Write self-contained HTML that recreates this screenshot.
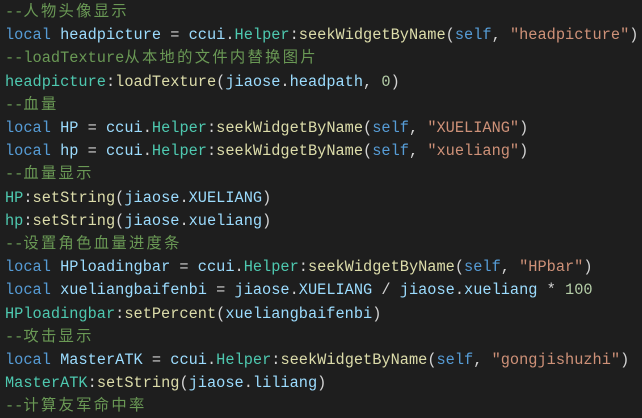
<!DOCTYPE html>
<html><head><style>
html,body{margin:0;padding:0;background:#1e1e1e;width:642px;height:418px;overflow:hidden}
pre{margin:0;padding:1px 0 0 5px;font-family:"Liberation Mono","Noto Sans CJK SC",monospace;font-size:15.3px;line-height:23.2px;color:#d4d4d4;white-space:pre}
.c{color:#6a9955}.k{color:#569cd6}.v{color:#9cdcfe}.t{color:#4ec9b0}.f{color:#dcdcaa}.s{color:#ce9178}.n{color:#b5cea8}
.z{letter-spacing:2.3px}
</style></head><body><pre>
<span class="c">--<span class="z">人物头像显示</span></span>
<span class="k">local</span> <span class="v">headpicture</span> = <span class="v">ccui</span>.<span class="t">Helper</span>:<span class="f">seekWidgetByName</span>(<span class="k">self</span>, <span class="s">"headpicture"</span>)
<span class="c">--loadTexture<span class="z">从本地的文件内替换图片</span></span>
<span class="t">headpicture</span>:<span class="f">loadTexture</span>(<span class="v">jiaose</span>.<span class="v">headpath</span>, <span class="n">0</span>)
<span class="c">--<span class="z">血量</span></span>
<span class="k">local</span> <span class="v">HP</span> = <span class="v">ccui</span>.<span class="t">Helper</span>:<span class="f">seekWidgetByName</span>(<span class="k">self</span>, <span class="s">"XUELIANG"</span>)
<span class="k">local</span> <span class="v">hp</span> = <span class="v">ccui</span>.<span class="t">Helper</span>:<span class="f">seekWidgetByName</span>(<span class="k">self</span>, <span class="s">"xueliang"</span>)
<span class="c">--<span class="z">血量显示</span></span>
<span class="t">HP</span>:<span class="f">setString</span>(<span class="v">jiaose</span>.<span class="v">XUELIANG</span>)
<span class="t">hp</span>:<span class="f">setString</span>(<span class="v">jiaose</span>.<span class="v">xueliang</span>)
<span class="c">--<span class="z">设置角色血量进度条</span></span>
<span class="k">local</span> <span class="v">HPloadingbar</span> = <span class="v">ccui</span>.<span class="t">Helper</span>:<span class="f">seekWidgetByName</span>(<span class="k">self</span>, <span class="s">"HPbar"</span>)
<span class="k">local</span> <span class="v">xueliangbaifenbi</span> = <span class="v">jiaose</span>.<span class="v">XUELIANG</span> / <span class="v">jiaose</span>.<span class="v">xueliang</span> * <span class="n">100</span>
<span class="t">HPloadingbar</span>:<span class="f">setPercent</span>(<span class="v">xueliangbaifenbi</span>)
<span class="c">--<span class="z">攻击显示</span></span>
<span class="k">local</span> <span class="v">MasterATK</span> = <span class="v">ccui</span>.<span class="t">Helper</span>:<span class="f">seekWidgetByName</span>(<span class="k">self</span>, <span class="s">"gongjishuzhi"</span>)
<span class="t">MasterATK</span>:<span class="f">setString</span>(<span class="v">jiaose</span>.<span class="v">liliang</span>)
<span class="c">--<span class="z">计算友军命中率</span></span>
</pre></body></html>
